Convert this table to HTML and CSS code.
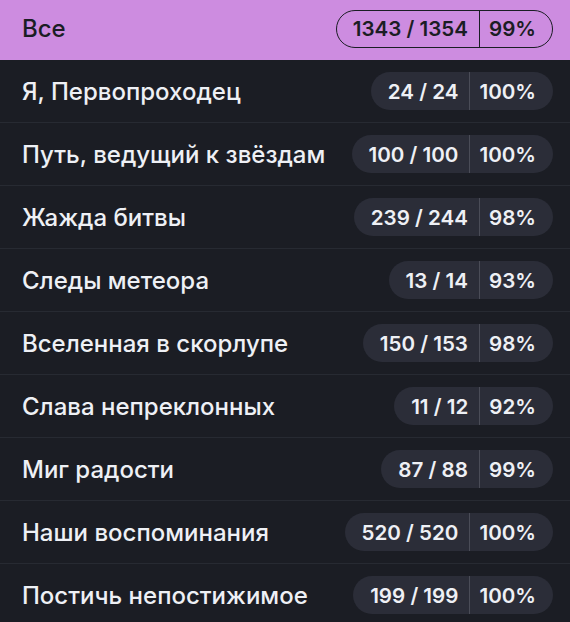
FILE: index.html
```html
<!DOCTYPE html>
<html lang="ru">
<head>
<meta charset="utf-8">
<link rel="stylesheet" href="styles.css">
</head>
<body>
<div class="list">
  <div class="row row-active"><span class="label">Все</span><span class="pill"><span class="count">1343 / 1354</span><span class="pct">99%</span></span></div>
  <div class="row"><span class="label">Я, Первопроходец</span><span class="pill"><span class="count">24 / 24</span><span class="pct">100%</span></span></div>
  <div class="row"><span class="label">Путь, ведущий к звёздам</span><span class="pill"><span class="count">100 / 100</span><span class="pct">100%</span></span></div>
  <div class="row"><span class="label">Жажда битвы</span><span class="pill"><span class="count">239 / 244</span><span class="pct">98%</span></span></div>
  <div class="row"><span class="label">Следы метеора</span><span class="pill"><span class="count">13 / 14</span><span class="pct">93%</span></span></div>
  <div class="row"><span class="label">Вселенная в скорлупе</span><span class="pill"><span class="count">150 / 153</span><span class="pct">98%</span></span></div>
  <div class="row"><span class="label">Слава непреклонных</span><span class="pill"><span class="count">11 / 12</span><span class="pct">92%</span></span></div>
  <div class="row"><span class="label">Миг радости</span><span class="pill"><span class="count">87 / 88</span><span class="pct">99%</span></span></div>
  <div class="row"><span class="label">Наши воспоминания</span><span class="pill"><span class="count">520 / 520</span><span class="pct">100%</span></span></div>
  <div class="row"><span class="label">Постичь непостижимое</span><span class="pill"><span class="count">199 / 199</span><span class="pct">100%</span></span></div>
</div>
</body>
</html>
```
FILE: styles.css
```css
html, body {
  margin: 0;
  padding: 0;
  background: #1b1d24;
  overflow: hidden;
}
body {
  font-family: Inter, "Noto Sans", sans-serif;
  color: #eef0f5;
}
.list {
  display: flex;
  flex-direction: column;
  margin-top: -3px;
}
.row {
  display: flex;
  align-items: center;
  justify-content: space-between;
  height: 62px;
  padding: 0 17px 0 22px;
  border-bottom: 1px solid #272a32;
  box-sizing: content-box;
}
.row-active {
  background: #cd8ce0;
  color: #1b1d24;
  border-bottom: none;
  height: 63px;
}
.label {
  font-size: 24px;
  font-weight: 500;
}
.pill {
  display: flex;
  align-items: stretch;
  height: 38px;
  border-radius: 19px;
  background: #2b2d38;
  font-size: 20.6px;
  font-weight: 600;
  box-sizing: border-box;
}
.row-active .pill {
  background: transparent;
  border: 1px solid #1b1d24;
}
.count {
  display: flex;
  align-items: center;
  padding: 0 11px 0 17px;
  border-right: 1px solid #4a4c57;
}
.row-active .count {
  border-right-color: #1b1d24;
  padding-left: 16px;
}
.pct {
  display: flex;
  align-items: center;
  padding: 0 17px 0 9px;
}
.row-active .pct {
  padding-right: 16px;
}
```
